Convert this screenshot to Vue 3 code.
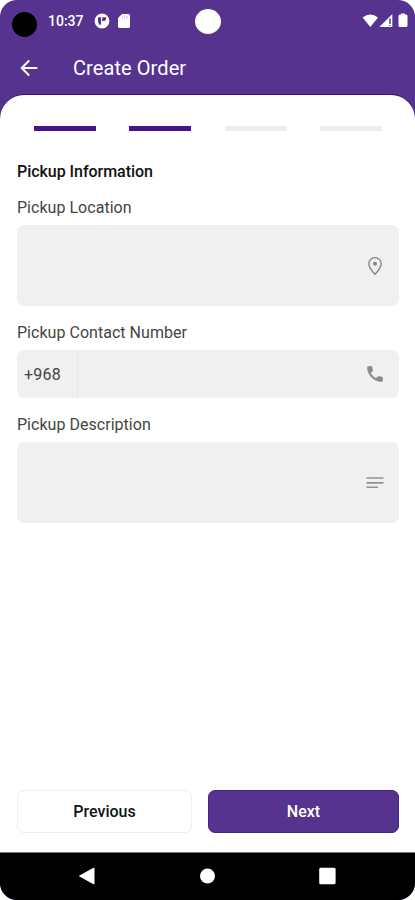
<script setup>
import { ref } from 'vue'

const steps = [1, 2, 3, 4]
const currentStep = ref(2)
const location = ref('')
const phone = ref('')
const description = ref('')
</script>

<template>
	<div class="phone">
		<header class="header">
			<div class="status-bar">
				<span class="camera"></span>
				<span class="time">10:37</span>
				<svg class="app-icon" viewBox="0 0 16 16">
					<circle cx="8" cy="8" r="7.4" fill="#fff" />
					<path d="M4 4.200h3v7.600H5.600Q4 10.500 4 8z" fill="#56338f" />
					<path d="M8.200 4.200h3.900v1.600q0 2.200-2.200 2.200H8.200z" fill="#56338f" />
				</svg>
				<svg class="sd-icon" viewBox="0 0 12 14">
					<path d="M4 0h6.500Q12 0 12 1.500v11q0 1.500-1.500 1.500h-9Q0 14 0 12.500V4z" fill="#fff" />
					<path d="M4.500 2v2.500M6.800 2v2.500M9.100 2v2.500" stroke="#cfc4df" stroke-width="1" />
				</svg>
				<span class="dot"></span>
				<svg class="signal-icons" viewBox="0 0 48 16">
					<path d="M.6 4.600Q8.300-1.400 16 4.600L8.300 14z" fill="#fff" />
					<path d="M30.300 1v13H17.300z" fill="#fff" />
					<path d="M28 5.500v5.500M28 12v1" stroke="#56338f" stroke-width="1.400" />
					<path d="M39 1.500V.5h4v1h1q1.500 0 1.500 1.500v9.500q0 1.500-1.500 1.500h-6q-1.500 0-1.500-1.500V3q0-1.500 1.500-1.500z" fill="#fff" />
				</svg>
			</div>
			<div class="app-bar">
				<svg class="back" viewBox="0 0 18 18">
					<path d="M17.300 9H2M9.200 1.500L1.700 9l7.500 7.500" fill="none" stroke="#fff" stroke-width="2" />
				</svg>
				<h1 class="title">Create Order</h1>
			</div>
		</header>

		<main class="sheet">
			<div class="steps">
				<span v-for="step in steps" :key="step" class="step" :class="{ active: step <= currentStep }"></span>
			</div>

			<h2 class="heading">Pickup Information</h2>

			<label class="label" for="location">Pickup Location</label>
			<div class="field field-large">
				<input id="location" v-model="location" class="input" />
				<svg class="icon" viewBox="0 0 20 20">
					<path d="M10 1.600c-3.500 0-6.200 2.700-6.200 6.100C3.800 11.500 10 18.300 10 18.300s6.200-6.800 6.200-10.600c0-3.400-2.700-6.100-6.200-6.100z" fill="none" stroke="#858585" stroke-width="1.400" />
					<circle cx="10" cy="7.800" r="2" fill="#858585" />
				</svg>
			</div>

			<label class="label" for="phone">Pickup Contact Number</label>
			<div class="field field-phone">
				<span class="prefix">+968</span>
				<input id="phone" v-model="phone" class="input" />
				<svg class="icon" viewBox="0 0 24 24">
					<path d="M6.620 10.790c1.440 2.830 3.760 5.140 6.590 6.590l2.200-2.200c.27-.27.67-.36 1.020-.24 1.120.37 2.330.57 3.570.57.55 0 1 .45 1 1V20c0 .55-.45 1-1 1C10.610 21 3 13.390 3 4c0-.55.45-1 1-1h3.500c.55 0 1 .45 1 1 0 1.250.2 2.450.57 3.570.11.35.03.74-.25 1.020z" fill="#8a8a8a" stroke="#8a8a8a" stroke-width=".8" />
				</svg>
			</div>

			<label class="label" for="description">Pickup Description</label>
			<div class="field field-large">
				<input id="description" v-model="description" class="input" />
				<svg class="icon" viewBox="0 0 20 20">
					<path d="M1.500 5h17M1.500 9.900h17M1.500 14.300H13" stroke="#929292" stroke-width="1.600" />
				</svg>
			</div>

			<div class="actions">
				<button class="button previous">Previous</button>
				<button class="button next">Next</button>
			</div>
		</main>

		<nav class="nav-bar">
			<svg class="nav-icon" viewBox="0 0 18 18">
				<path d="M1.500 9L16 1v16z" fill="#fff" stroke="#fff" stroke-linejoin="round" />
			</svg>
			<svg class="nav-icon" viewBox="0 0 18 18">
				<circle cx="9.500" cy="9" r="7.500" fill="#fff" />
			</svg>
			<svg class="nav-icon" viewBox="0 0 18 18">
				<rect x="1.200" y=".8" width="16.400" height="16.400" rx="1.500" fill="#fff" />
			</svg>
		</nav>
	</div>
</template>

<style>
body {
	background: #fff;
}
</style>

<style scoped>
.phone {
	display: flex;
	flex-direction: column;
	width: 415px;
	height: 900px;
	overflow: hidden;
	border-radius: 17px;
	background: #56338f;
	font-family: Roboto, sans-serif;
}

.header {
	flex: none;
	height: 95px;
	color: #fff;
}

.status-bar {
	position: relative;
	display: flex;
	align-items: center;
	height: 42px;
	box-sizing: border-box;
	padding: 0 5px 1px 12px;
}

.camera {
	width: 25px;
	height: 25px;
	margin-top: 8px;
	border-radius: 50%;
	background: #000;
}

.time {
	width: 46px;
	margin-left: 11px;
	font-size: 14px;
	font-weight: 500;
}

.app-icon {
	width: 16px;
	height: 16px;
}

.sd-icon {
	width: 12px;
	height: 14px;
	margin-left: 8px;
}

/* Camera cutout sits over the middle of the bar */
.dot {
	position: absolute;
	left: 195px;
	top: 9px;
	width: 26px;
	height: 25px;
	border-radius: 50%;
	background: #fff;
}

.signal-icons {
	width: 48px;
	height: 16px;
	margin-left: auto;
}

.app-bar {
	display: flex;
	align-items: center;
	height: 52px;
	padding-left: 20px;
}

.back {
	width: 18px;
	height: 18px;
}

.title {
	margin: 0 0 0 35px;
	font-size: 20px;
	font-weight: 400;
	line-height: 24px;
	letter-spacing: 0.08px;
}

.sheet {
	display: flex;
	flex: 1;
	flex-direction: column;
	padding: 31px 16px 19px 17px;
	border-radius: 24px 24px 0 0;
	background: #fff;
	box-shadow: 0 -1px 0 #430c83;
}

.steps {
	display: grid;
	grid-template-columns: repeat(4, 62px);
	justify-content: space-between;
	padding: 0 16.5px;
}

.step {
	height: 5px;
	background: #ededed;
}

.step.active {
	background: #46148a;
}

.heading {
	margin: 31px 0 0;
	color: #111;
	font-size: 16px;
	font-weight: 500;
	line-height: 20px;
	letter-spacing: -0.04px;
}

.label {
	margin-top: 16px;
	color: #444;
	font-size: 16px;
	line-height: 20px;
	letter-spacing: 0.03px;
}

.field {
	display: flex;
	align-items: center;
	box-sizing: border-box;
	margin-top: 7px;
	padding-right: 14px;
	border-radius: 7px;
	background: #f0f0f0;
}

.field-large {
	height: 81px;
}

.field-large + .label {
	margin-top: 17px;
}

.field-phone {
	height: 48px;
}

.field-phone + .label {
	margin-top: 17px;
}

.prefix {
	display: flex;
	align-items: center;
	align-self: stretch;
	width: 61px;
	box-sizing: border-box;
	padding-left: 7px;
	border-right: 1px solid #e8e8e8;
	color: #444;
	font-size: 16px;
	letter-spacing: 0.25px;
}

.input {
	flex: 1;
	min-width: 0;
	height: 100%;
	box-sizing: border-box;
	padding: 0 10px;
	border: 0;
	outline: 0;
	background: transparent;
	font: inherit;
}

.icon {
	width: 20px;
	height: 20px;
}

.actions {
	display: grid;
	grid-template-columns: 175px 191px;
	justify-content: space-between;
	margin-top: auto;
}

.button {
	height: 43px;
	padding: 0;
	border-radius: 7px;
	font-family: inherit;
	font-size: 16px;
	font-weight: 500;
}

.previous {
	border: 1px solid #eee;
	background: #fff;
	color: #111;
}

.next {
	border: 1px solid #42258b;
	background: #56338f;
	color: #fff;
}

.nav-bar {
	display: flex;
	flex: none;
	align-items: center;
	justify-content: space-between;
	height: 48px;
	box-sizing: border-box;
	padding: 0 79px 1px 78px;
	border-top: 1px solid #777;
	background: #000;
}

.nav-icon {
	width: 18px;
	height: 18px;
}
</style>
